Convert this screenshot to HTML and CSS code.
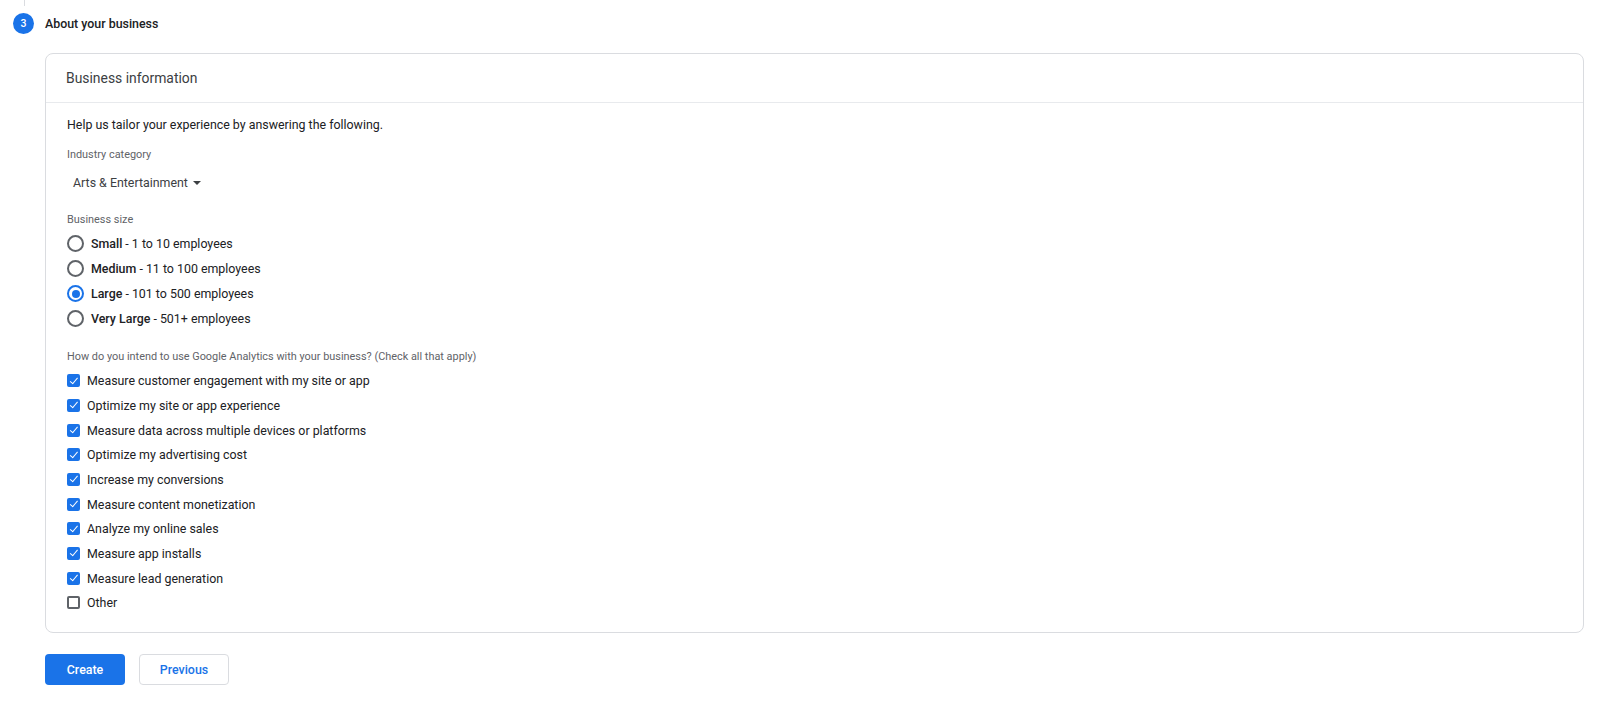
FILE: index.html
```html
<!DOCTYPE html>
<html lang="en">
<head>
<meta charset="utf-8">
<title>About your business</title>
<link rel="stylesheet" href="styles.css">
</head>
<body>
<div class="step-line"></div>
<div class="step">
  <span class="step-num">3</span>
  <span class="step-title">About your business</span>
</div>
<section class="card">
  <header class="card-head">Business information</header>
  <div class="card-body">
    <p class="intro">Help us tailor your experience by answering the following.</p>
    <div class="label label-industry">Industry category</div>
    <div class="select">Arts &amp; Entertainment <span class="caret"></span></div>
    <div class="label label-size">Business size</div>
    <div class="radios">
      <div class="radio-row"><span class="radio"></span><span><b>Small</b> - 1 to 10 employees</span></div>
      <div class="radio-row"><span class="radio"></span><span><b>Medium</b> - 11 to 100 employees</span></div>
      <div class="radio-row"><span class="radio on"></span><span><b>Large</b> - 101 to 500 employees</span></div>
      <div class="radio-row"><span class="radio"></span><span><b>Very Large</b> - 501+ employees</span></div>
    </div>
    <div class="label label-use">How do you intend to use Google Analytics with your business? (Check all that apply)</div>
    <div class="checks">
      <div class="check-row"><span class="box on"></span><span>Measure customer engagement with my site or app</span></div>
      <div class="check-row"><span class="box on"></span><span>Optimize my site or app experience</span></div>
      <div class="check-row"><span class="box on"></span><span>Measure data across multiple devices or platforms</span></div>
      <div class="check-row"><span class="box on"></span><span>Optimize my advertising cost</span></div>
      <div class="check-row"><span class="box on"></span><span>Increase my conversions</span></div>
      <div class="check-row"><span class="box on"></span><span>Measure content monetization</span></div>
      <div class="check-row"><span class="box on"></span><span>Analyze my online sales</span></div>
      <div class="check-row"><span class="box on"></span><span>Measure app installs</span></div>
      <div class="check-row"><span class="box on"></span><span>Measure lead generation</span></div>
      <div class="check-row"><span class="box"></span><span>Other</span></div>
    </div>
  </div>
</section>
<div class="actions">
  <button class="btn btn-primary">Create</button>
  <button class="btn btn-secondary">Previous</button>
</div>
</body>
</html>
```

FILE: styles.css
```css
html, body {
  margin: 0;
  padding: 0;
  background: #fff;
}
body {
  font-family: Roboto, "Liberation Sans", Arial, sans-serif;
  color: #202124;
  font-size: 12.4px;
}
.step-line {
  width: 1px;
  height: 6px;
  margin-left: 24px;
  background: #dadce0;
}
.step {
  display: flex;
  align-items: center;
  height: 21px;
  margin-top: 7px;
  padding-left: 13px;
}
.step-num {
  width: 21px;
  height: 21px;
  border-radius: 50%;
  background: #1a73e8;
  color: #fff;
  font-size: 10.5px;
  font-weight: 500;
  display: flex;
  align-items: center;
  justify-content: center;
}
.step-title {
  margin-left: 11px;
  font-size: 12.4px;
  font-weight: 500;
  color: #202124;
}
.card {
  margin: 19px 16px 0 45px;
  border: 1px solid #dadce0;
  border-radius: 8px;
}
.card-head {
  height: 48px;
  line-height: 49px;
  padding-left: 20px;
  font-size: 13.9px;
  color: #3c4043;
  border-bottom: 1px solid #e8eaed;
}
.card-body {
  padding: 12px 21px 17px;
}
.intro {
  margin: 0;
  line-height: 20px;
  font-size: 12.4px;
  color: #202124;
}
.label {
  font-size: 10.9px;
  line-height: 16px;
  color: #5f6368;
}
.label-industry { margin-top: 12px; }
.select {
  display: flex;
  align-items: center;
  height: 24px;
  margin-top: 7px;
  padding-left: 6px;
  font-size: 12.4px;
  color: #3c4043;
}
.caret {
  width: 0;
  height: 0;
  margin-left: 5px;
  margin-top: 1px;
  border-left: 4px solid transparent;
  border-right: 4px solid transparent;
  border-top: 4px solid #3c4043;
}
.label-size { margin-top: 18px; }
.radios { margin-top: 3px; }
.radio-row {
  display: flex;
  align-items: center;
  height: 25px;
}
.radio {
  box-sizing: border-box;
  width: 17px;
  height: 17px;
  border: 2px solid #5f6368;
  border-radius: 50%;
  margin-right: 7px;
  display: flex;
  align-items: center;
  justify-content: center;
}
.radio.on { border-color: #1a73e8; }
.radio.on::after {
  content: "";
  width: 8px;
  height: 8px;
  border-radius: 50%;
  background: #1a73e8;
}
.radio-row b { font-weight: 500; }
.label-use { margin-top: 18px; }
.checks { margin-top: 3.5px; }
.check-row {
  display: flex;
  align-items: center;
  height: 24.67px;
}
.box {
  box-sizing: border-box;
  width: 13px;
  height: 13px;
  border: 2px solid #5f6368;
  border-radius: 2px;
  margin-right: 7px;
  position: relative;
}
.box.on {
  background: #1a73e8;
  border-color: #1a73e8;
}
.box.on::after {
  content: "";
  position: absolute;
  left: 2.5px;
  top: -0.5px;
  width: 3px;
  height: 6.5px;
  border-right: 1.5px solid #fff;
  border-bottom: 1.5px solid #fff;
  transform: rotate(40deg);
}
.actions {
  display: flex;
  gap: 14px;
  margin: 21px 0 0 45px;
}
.btn {
  box-sizing: border-box;
  height: 31px;
  border-radius: 4px;
  font-family: Roboto, "Liberation Sans", Arial, sans-serif;
  font-size: 12.4px;
  font-weight: 500;
  padding: 0;
  cursor: pointer;
}
.btn-primary {
  width: 80px;
  background: #1a73e8;
  color: #fff;
  border: none;
}
.btn-secondary {
  width: 90px;
  background: #fff;
  color: #1a73e8;
  border: 1px solid #dadce0;
}
```
